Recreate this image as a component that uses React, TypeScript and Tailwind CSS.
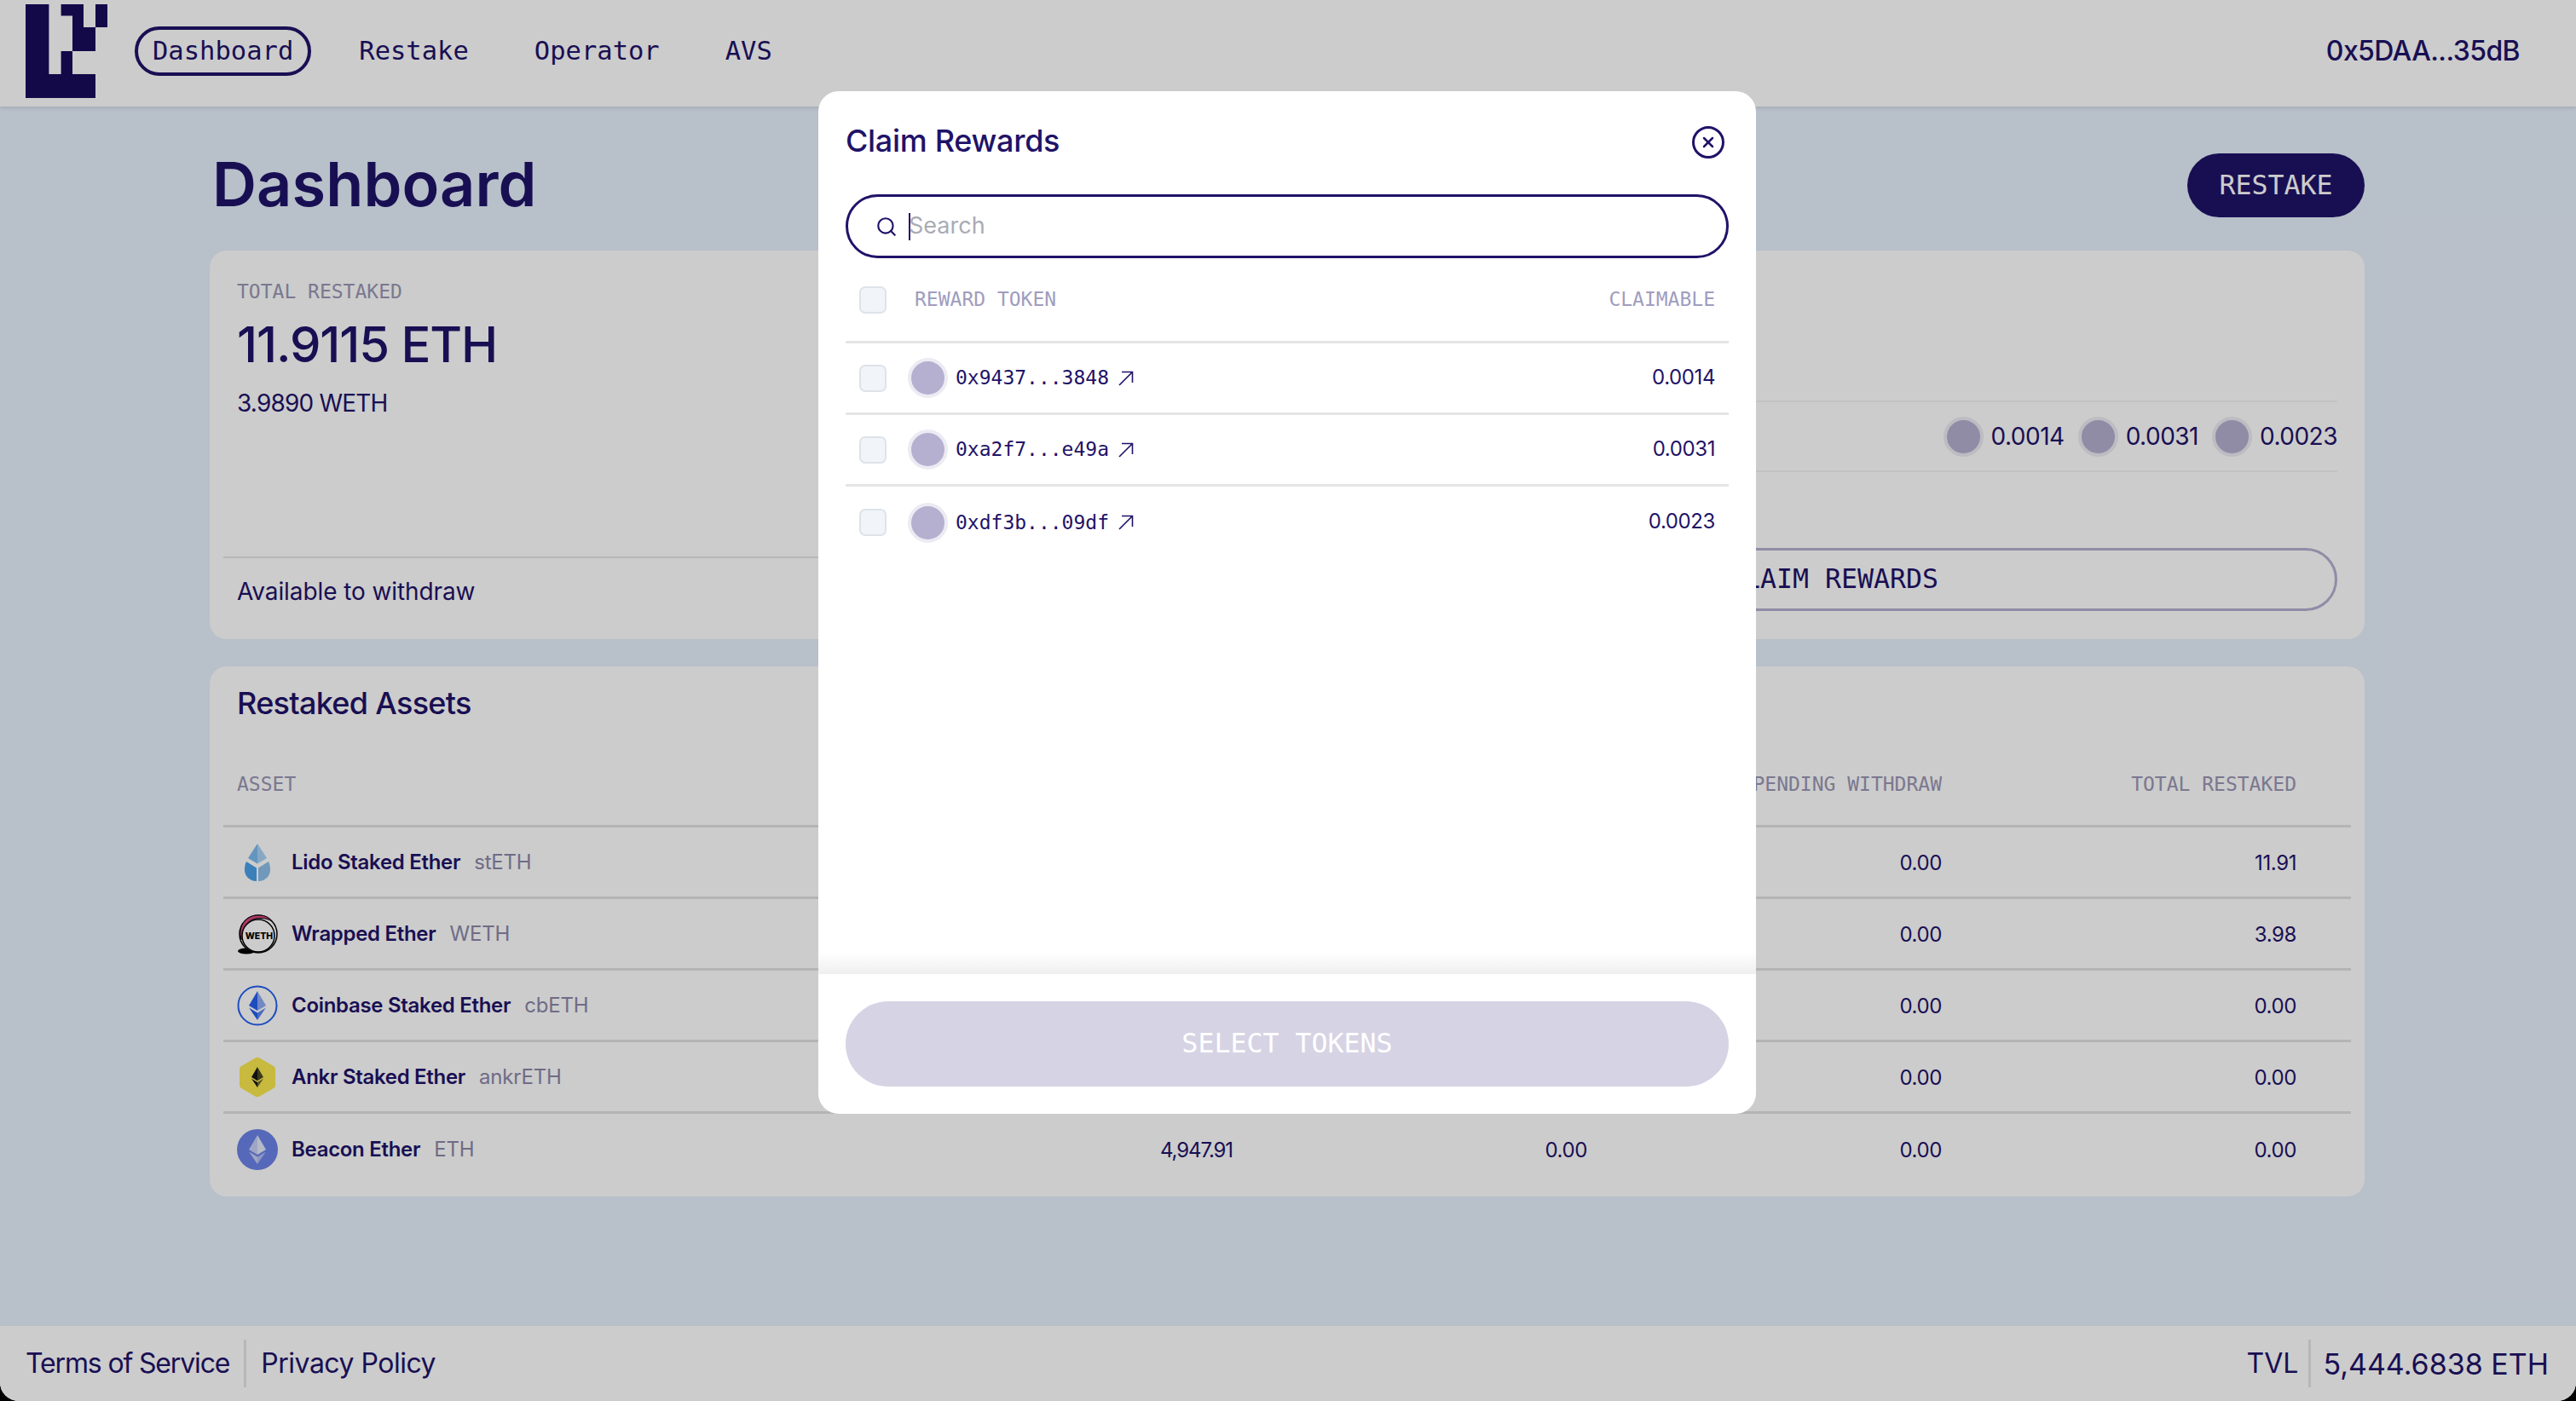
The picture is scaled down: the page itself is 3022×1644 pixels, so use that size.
import React from 'react';
import { Search, X } from 'lucide-react';

const sans = "font-['Inter',sans-serif]";
const mono = "font-['DejaVu_Sans_Mono',monospace]";

const EthDiamond: React.FC<{ top: string; side: string; low: string }> = ({ top, side, low }) => (
  <>
    <polygon points="24,7 14,24 24,30" fill={top} />
    <polygon points="24,7 34,24 24,30" fill={side} />
    <polygon points="14,26.5 24,41 24,32.5" fill={top} />
    <polygon points="34,26.5 24,41 24,32.5" fill={low} />
  </>
);

const LidoIcon = () => (
  <svg viewBox="0 0 48 48" className="w-12 h-12 shrink-0">
    <path d="M24 2 L13 19 L24 25.5 Z" fill="#7DBBEF" />
    <path d="M24 2 L35 19 L24 25.5 Z" fill="#A8D2F5" />
    <path d="M11 23 L23 30.5 V46 C14.5 46 9 39.5 9 33 C9 29 9.5 26 11 23 Z" fill="#4AA0E8" />
    <path d="M37 23 L25 30.5 V46 C33.5 46 39 39.5 39 33 C39 29 38.5 26 37 23 Z" fill="#8CC0EC" />
  </svg>
);

const WethIcon = () => (
  <svg viewBox="0 0 48 48" className="w-12 h-12 shrink-0">
    <ellipse cx="11" cy="44" rx="10" ry="3.5" fill="#000" />
    <circle cx="25" cy="24" r="22" fill="#fff" stroke="#000" strokeWidth="1.5" />
    <path d="M5 30 C0 14 12 1 26 2 C33 2 38 5 41 9 C34 5 28 5 22 6 C12 8 6 17 7 30 Z" fill="#D8467F" stroke="#000" strokeWidth="1" />
    <circle cx="25" cy="26" r="19" fill="#fff" stroke="#000" strokeWidth="1.5" />
    <text x="26" y="29.5" textAnchor="middle" fontFamily="Inter, sans-serif" fontWeight="800" fontSize="10.5" fill="#000">WETH</text>
  </svg>
);

const CbIcon = () => (
  <svg viewBox="0 0 48 48" className="w-12 h-12 shrink-0">
    <circle cx="24" cy="24" r="22.5" fill="#fff" stroke="#2460F0" strokeWidth="2" />
    <EthDiamond top="#2460F0" side="#8FABF5" low="#5C86F0" />
  </svg>
);

const AnkrIcon = () => (
  <svg viewBox="0 0 48 48" className="w-12 h-12 shrink-0">
    <path d="M21.5 1.5 Q24 0 26.5 1.5 L42 10.5 Q45 12 45 15 V33 Q45 36 42 37.5 L26.5 46.5 Q24 48 21.5 46.5 L6 37.5 Q3 36 3 33 V15 Q3 12 6 10.5 Z" fill="#FBE84F" />
    <g transform="translate(7.2 7.2) scale(0.7)">
      <EthDiamond top="#161616" side="#4B4A20" low="#6B6A2C" />
    </g>
  </svg>
);

const BeaconIcon = () => (
  <svg viewBox="0 0 48 48" className="w-12 h-12 shrink-0">
    <circle cx="24" cy="24" r="24" fill="#6C82E8" />
    <EthDiamond top="#C6D0F6" side="#E4E9FB" low="#AEBCF2" />
  </svg>
);

const assets = [
  { name: 'Lido Staked Ether', symbol: 'stETH', Icon: LidoIcon, tvl: '', shares: '', pending: '0.00', total: '11.91' },
  { name: 'Wrapped Ether', symbol: 'WETH', Icon: WethIcon, tvl: '', shares: '', pending: '0.00', total: '3.98' },
  { name: 'Coinbase Staked Ether', symbol: 'cbETH', Icon: CbIcon, tvl: '', shares: '', pending: '0.00', total: '0.00' },
  { name: 'Ankr Staked Ether', symbol: 'ankrETH', Icon: AnkrIcon, tvl: '', shares: '', pending: '0.00', total: '0.00' },
  { name: 'Beacon Ether', symbol: 'ETH', Icon: BeaconIcon, tvl: '4,947.91', shares: '0.00', pending: '0.00', total: '0.00' },
];

const rewards = [
  { address: '0x9437...3848', amount: '0.0014' },
  { address: '0xa2f7...e49a', amount: '0.0031' },
  { address: '0xdf3b...09df', amount: '0.0023' },
];

const rowGrid = 'grid grid-cols-[768px_416px_416px_416px_416px] pr-[64px] items-center';

const Logo = () => (
  <svg viewBox="0 0 96 110" className="w-[96px] h-[110px] shrink-0">
    <path
      fill="#180C5C"
      d="M0 0H27.4V82H41.6V55H55V82H82V110H0Z M41.6 0H68V27H82V55H55V13.5H41.6Z M82 0H96V27H82Z"
    />
  </svg>
);

const Checkbox = () => (
  <div className="w-[32px] h-[32px] rounded-[7px] bg-[#F1F5F9] border-2 border-[#DEE3EA] shrink-0" />
);

const ClaimModal = () => (
  <div className="absolute left-[960px] top-[107px] w-[1100px] h-[1200px] bg-white rounded-[24px] flex flex-col overflow-hidden text-[#1F1368]">
    <div className="flex-1 px-[32px] pt-[30px] relative">
      <div className="flex items-center justify-between h-[56px]">
        <h2 className={`${sans} text-[36px] font-medium tracking-[-0.3px]`}>Claim Rewards</h2>
        <button className="w-[38px] h-[38px] mr-[5px] mt-[4px] rounded-full border-[3px] border-[#1F1368] flex items-center justify-center">
          <X size={20} strokeWidth={3} />
        </button>
      </div>
      <div className="mt-[35px] h-[75px] rounded-full border-[3px] border-[#1F1368] flex items-center pl-[32px]">
        <Search size={26} strokeWidth={2} className="shrink-0" />
        <span className="w-[2px] h-[32px] bg-[#1F1368] ml-[13px] -mr-[2px]" />
        <span className={`${sans} text-[27px] text-[#A9ABB5]`}>Search</span>
      </div>
      <div className="h-[100px] flex items-center justify-between pl-[16px] pr-[16px] border-b-[3px] border-[#E5E5E5]">
        <div className="flex items-center gap-[33px]">
          <Checkbox />
          <span className={`${mono} text-[23px] text-[#A09DBE]`}>REWARD TOKEN</span>
        </div>
        <span className={`${mono} text-[23px] text-[#A09DBE]`}>CLAIMABLE</span>
      </div>
      {rewards.map((r, i) => (
        <div key={i} className={`h-[84px] flex items-center justify-between pl-[16px] pr-[16px] ${i < 2 ? 'border-b-[3px] border-[#E5E5E5]' : ''}`}>
          <div className="flex items-center">
            <Checkbox />
            <div className="ml-[25px] w-[47px] h-[47px] rounded-full bg-[#B5B0D0] border-[4px] border-[#ECEBF3]" />
            <span className={`${mono} text-[23px] ml-[9px]`}>{r.address}</span>
            <svg viewBox="0 0 18 18" className="w-[18px] h-[18px] ml-[11px]" fill="none" stroke="#1F1368" strokeWidth="1.6">
              <path d="M1 17 L16.5 1.5 M4 1.5 H16.5 V14" />
            </svg>
          </div>
          <span className={`${sans} text-[24px] tracking-[-0.4px] -mt-[2px]`}>{r.amount}</span>
        </div>
      ))}
      <div className="absolute left-0 right-0 bottom-0 h-[26px] bg-gradient-to-t from-[#EFEFEF] to-white" />
    </div>
    <div className="h-[164px] px-[32px] pt-[32px] shrink-0">
      <button className={`${mono} w-full h-[100px] rounded-full bg-[#D6D3E4] text-white text-[31.6px]`}>SELECT TOKENS</button>
    </div>
  </div>
);

export default function App() {
  return (
    <div className="relative w-full h-screen bg-black overflow-hidden">
      <div className="w-full h-full bg-[#E7F0FD] rounded-b-[22px] overflow-hidden flex flex-col text-[#1F1368]">
        {/* Navbar */}
        <nav className="h-[125px] shrink-0 bg-white shadow-[0_2px_4px_rgba(0,0,0,0.1)] flex items-center pl-[30px] pr-[66px] pb-[6px]">
          <Logo />
          <div className={`${mono} text-[30.5px] flex items-center ml-[32px]`}>
            <a className="h-[58px] px-[17px] border-[4px] border-[#1F1368] rounded-full flex items-center">Dashboard</a>
            <a className="ml-[56px]">Restake</a>
            <a className="ml-[77px]">Operator</a>
            <a className="ml-[77px]">AVS</a>
          </div>
          <span className={`${sans} ml-auto text-[32px] font-medium tracking-[-0.6px]`}>0x5DAA...35dB</span>
        </nav>

        <main className="flex-1 w-[2528px] ml-[246px]">
          <div className="flex items-center justify-between mt-[55px] h-[75px]">
            <h1 className={`${sans} text-[72px] font-semibold tracking-[0.1px] ml-[3px] -mt-[3px]`}>Dashboard</h1>
            <button className={`${mono} w-[208px] h-[75px] rounded-full bg-[#1F1368] text-white text-[31.6px]`}>RESTAKE</button>
          </div>

          {/* Summary */}
          <section className="mt-[39px] h-[456px] bg-white rounded-[20px] grid grid-cols-2">
            <div className="flex flex-col pl-[16px]">
              <div className="pl-[16px] pt-[36px]">
                <div className={`${mono} text-[23px] leading-[24px] text-[#9A96B4]`}>TOTAL RESTAKED</div>
                <div className={`${sans} text-[58px] leading-[70px] mt-[15px] font-medium tracking-[-1.1px]`}>11.9115 ETH</div>
                <div className={`${sans} text-[28px] leading-[36px] mt-[16px] tracking-[-0.8px]`}>3.9890 WETH</div>
              </div>
              <div className="mt-auto mb-[16px] h-[81px] border-t-2 border-[#E5E5E5] pl-[16px] flex items-center">
                <span className={`${sans} text-[28px] tracking-[-0.1px] -mt-[2px]`}>Available to withdraw</span>
              </div>
            </div>
            <div className="flex flex-col pt-[176px] pr-[32px] pl-[49px]">
              <div className="h-[84px] border-y-2 border-[#F3F3F3] flex items-center justify-end gap-[16px]">
                {rewards.map((r, i) => (
                  <div key={i} className="flex items-center gap-[9px]">
                    <div className="w-[47px] h-[47px] rounded-full bg-[#B5B0D0] border-[4px] border-[#ECEBF3]" />
                    <span className={`${sans} text-[28px] tracking-[-0.5px]`}>{r.amount}</span>
                  </div>
                ))}
              </div>
              <button className={`${mono} mt-[89px] h-[74px] rounded-full border-[3px] border-[#B5B0D0] text-[31.6px]`}>CLAIM REWARDS</button>
            </div>
          </section>

          {/* Restaked assets */}
          <section className="mt-[32px] h-[622px] bg-white rounded-[20px] px-[16px]">
            <h2 className={`${sans} text-[36px] font-medium tracking-[-0.7px] pl-[16px] pt-[18px] leading-[50px]`}>Restaked Assets</h2>
            <div className={`${rowGrid} ${mono} h-[121px] pt-[22px] text-[23px] text-[#9A96B4] border-b-[3px] border-[#E2E2E2]`}>
              <span className="pl-[16px]">ASSET</span>
              <span />
              <span />
              <span className="text-right">PENDING WITHDRAW</span>
              <span className="text-right">TOTAL RESTAKED</span>
            </div>
            {assets.map((a, i) => (
              <div key={a.symbol} className={`${rowGrid} ${sans} h-[84px] ${i < 4 ? 'border-b-[3px] border-[#E2E2E2]' : ''}`}>
                <div className="flex items-center pl-[16px]">
                  <a.Icon />
                  <span className="ml-[16px] text-[24px] font-semibold tracking-[-0.3px]">{a.name}</span>
                  <span className="ml-[16px] text-[24px] text-[#8B87A8] tracking-[-0.2px]">{a.symbol}</span>
                </div>
                <span className="text-right text-[24px] tracking-[-1.1px] pt-[2px]">{a.tvl}</span>
                <span className="text-right text-[24px] tracking-[-0.4px] pt-[2px]">{a.shares}</span>
                <span className="text-right text-[24px] tracking-[-0.4px] pt-[2px]">{a.pending}</span>
                <span className="text-right text-[24px] tracking-[-0.4px] pt-[2px]">{a.total}</span>
              </div>
            ))}
          </section>
        </main>

        {/* Footer */}
        <footer className={`${sans} h-[88px] shrink-0 bg-white flex items-center justify-between pl-[30px] pr-[32px] text-[32px]`}>
          <div className="flex items-center">
            <span className="tracking-[-1.15px]">Terms of Service</span>
            <span className="w-[3px] h-[56px] bg-[#E5E5E5] mx-[17px]" />
            <span className="tracking-[-0.5px]">Privacy Policy</span>
          </div>
          <div className="flex items-center">
            <span>TVL</span>
            <span className="w-[3px] h-[56px] bg-[#E5E5E5] ml-[12px] mr-[14px]" />
            <span className="text-[34px]">5,444.6838 ETH</span>
          </div>
        </footer>
      </div>

      {/* Dim layer + modal */}
      <div className="absolute inset-0 bg-black/20 rounded-b-[22px]" />
      <ClaimModal />
    </div>
  );
}
